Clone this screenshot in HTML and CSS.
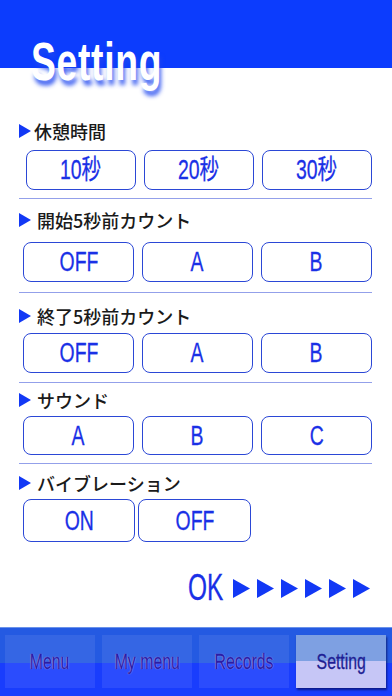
FILE: index.html
```html
<!DOCTYPE html>
<html lang="ja">
<head>
<meta charset="utf-8">
<title>Setting</title>
<link rel="stylesheet" href="styles.css">
</head>
<body>
<div class="page">
  <header class="header">
    <h1 class="title">Setting</h1>
  </header>

  <section class="sec s1">
    <div class="label"><svg class="tri" viewBox="0 0 12 14"><polygon points="0,0 12,7 0,14"/></svg><span class="ltext tight">休憩時間</span></div>
    <div class="btns">
      <div class="btn"><span class="bt">10秒</span></div>
      <div class="btn"><span class="bt">20秒</span></div>
      <div class="btn"><span class="bt">30秒</span></div>
    </div>
  </section>

  <section class="sec s2">
    <div class="label"><svg class="tri" viewBox="0 0 12 14"><polygon points="0,0 12,7 0,14"/></svg><span class="ltext">開始5秒前カウント</span></div>
    <div class="btns">
      <div class="btn"><span class="bt">OFF</span></div>
      <div class="btn"><span class="bt">A</span></div>
      <div class="btn"><span class="bt">B</span></div>
    </div>
  </section>

  <section class="sec s3">
    <div class="label"><svg class="tri" viewBox="0 0 12 14"><polygon points="0,0 12,7 0,14"/></svg><span class="ltext">終了5秒前カウント</span></div>
    <div class="btns">
      <div class="btn"><span class="bt">OFF</span></div>
      <div class="btn"><span class="bt">A</span></div>
      <div class="btn"><span class="bt">B</span></div>
    </div>
  </section>

  <section class="sec s4">
    <div class="label"><svg class="tri" viewBox="0 0 12 14"><polygon points="0,0 12,7 0,14"/></svg><span class="ltext">サウンド</span></div>
    <div class="btns">
      <div class="btn"><span class="bt">A</span></div>
      <div class="btn"><span class="bt">B</span></div>
      <div class="btn"><span class="bt">C</span></div>
    </div>
  </section>

  <section class="sec s5">
    <div class="label"><svg class="tri" viewBox="0 0 12 14"><polygon points="0,0 12,7 0,14"/></svg><span class="ltext">バイブレーション</span></div>
    <div class="btns two">
      <div class="btn"><span class="bt">ON</span></div>
      <div class="btn"><span class="bt">OFF</span></div>
    </div>
  </section>

  <div class="ok">
    <span class="oktext">OK</span>
    <div class="arrows">
      <svg class="arr" viewBox="0 0 17 19"><polygon points="0,0 17,9.5 0,19"/></svg>
      <svg class="arr" viewBox="0 0 17 19"><polygon points="0,0 17,9.5 0,19"/></svg>
      <svg class="arr" viewBox="0 0 17 19"><polygon points="0,0 17,9.5 0,19"/></svg>
      <svg class="arr" viewBox="0 0 17 19"><polygon points="0,0 17,9.5 0,19"/></svg>
      <svg class="arr" viewBox="0 0 17 19"><polygon points="0,0 17,9.5 0,19"/></svg>
      <svg class="arr" viewBox="0 0 17 19"><polygon points="0,0 17,9.5 0,19"/></svg>
    </div>
  </div>

  <nav class="nav">
    <div class="tab"><span class="tt">Menu</span></div>
    <div class="tab"><span class="tt">My menu</span></div>
    <div class="tab"><span class="tt">Records</span></div>
    <div class="tab active"><span class="tt">Setting</span></div>
  </nav>
</div>
</body>
</html>
```

FILE: styles.css
```css
* { box-sizing: border-box; }
html, body { margin: 0; padding: 0; background: #fff; }
body { font-family: "Liberation Sans", "Noto Sans CJK JP", sans-serif; }

.page {
  width: 392px;
  height: 696px;
  display: flex;
  flex-direction: column;
  overflow: hidden;
}

.header {
  background: linear-gradient(#0c3cfd 0, #0c3cfd 68px, #fff 68px);
  padding: 34px 0 0 31px;
}
.title {
  display: inline-block;
  margin: 0;
  font-family: "Liberation Sans", sans-serif;
  font-weight: bold;
  font-size: 54px;
  line-height: 54px;
  letter-spacing: 1px;
  color: #fff;
  transform: scaleX(0.69);
  transform-origin: left center;
  text-shadow: 3px 5px 5px rgba(30, 70, 240, 0.85);
}

.sec {
  margin: 0 20px 0 19px;
  border-bottom: 1px solid #93a0ea;
}
.s1 { padding-top: 33px; padding-bottom: 8px; }
.s2 { padding-top: 11px; padding-bottom: 10px; }
.s3 { padding-top: 13px; padding-bottom: 9px; }
.s4 { padding-top: 7px; padding-bottom: 8px; }
.s5 { padding-top: 9px; border-bottom: none; }

.label {
  display: flex;
  align-items: center;
  height: 20px;
}
.tri { width: 12px; height: 14px; fill: #1238f5; flex: none; }
.ltext {
  margin-left: 6px;
  font-family: "Noto Sans CJK JP", sans-serif;
  font-weight: 500;
  font-size: 18px;
  line-height: 20px;
  color: #1a1a1a;
}
.ltext.tight { margin-left: 3px; }

.btns {
  display: grid;
  grid-template-columns: 111px 111px 111px;
  column-gap: 8px;
  padding-left: 4px;
  height: 40px;
}
.s1 .btns { margin-top: 9px; padding-left: 7px; grid-template-columns: 110px 110px 110px; }
.s2 .btns { margin-top: 12px; }
.s3 .btns { margin-top: 7px; }
.s4 .btns { margin-top: 6px; height: 39px; }
.btns.two { margin-top: 6px; height: 43px; grid-template-columns: 112px 113px; column-gap: 3px; }

.btn {
  border: 1.5px solid #2b47d6;
  border-radius: 8px;
  display: flex;
  align-items: center;
  justify-content: center;
  background: #fff;
}
.bt {
  display: inline-block;
  font-family: "Liberation Sans", "Noto Sans CJK JP", sans-serif;
  font-size: 27px;
  line-height: 30px;
  color: #1a30e6;
  transform: scaleX(0.72);
  -webkit-text-stroke: 0.3px #1a30e6;
}

.ok {
  display: flex;
  justify-content: flex-end;
  align-items: center;
  padding-right: 22px;
  margin-top: 30px;
  height: 32px;
}
.oktext {
  display: inline-block;
  font-family: "Liberation Sans", sans-serif;
  font-size: 37px;
  line-height: 32px;
  color: #1a30e6;
  transform: scaleX(0.66);
  -webkit-text-stroke: 0.3px #1a30e6;
  margin-right: 1px;
}
.arrows { display: flex; gap: 7px; }
.arr { width: 17px; height: 19px; fill: #1238f5; }

.nav {
  margin-top: auto;
  height: 69px;
  display: flex;
  gap: 7px;
  padding: 8px 6px 8px 5px;
  background: linear-gradient(#6a92ea 0, #6a92ea 1px, #245ae2 1px, #245ae2 36px, #193dfd 36px, #193dfd 100%);
}
.tab {
  width: 90px;
  display: flex;
  align-items: center;
  justify-content: center;
  background: rgba(255, 255, 255, 0.08);
}
.tt {
  display: inline-block;
  font-family: "Liberation Sans", sans-serif;
  font-size: 22px;
  line-height: 24px;
  color: #2a1ca6;
  -webkit-text-stroke: 0.3px #2a1ca6;
  text-shadow: 0 0 1px #b4b8ff, 0 0 1px #b4b8ff;
  transform: scaleX(0.72);
  white-space: nowrap;
}
.tab.active {
  background: linear-gradient(#7ea0e2 0, #7ea0e2 50%, #c6c6f6 50%, #c6c6f6 100%);
  box-shadow: 1px 2px 2px rgba(0, 0, 60, 0.6);
}
.tab.active .tt { color: #1e1e94; -webkit-text-stroke: 0.3px #1e1e94; text-shadow: none; }
```
